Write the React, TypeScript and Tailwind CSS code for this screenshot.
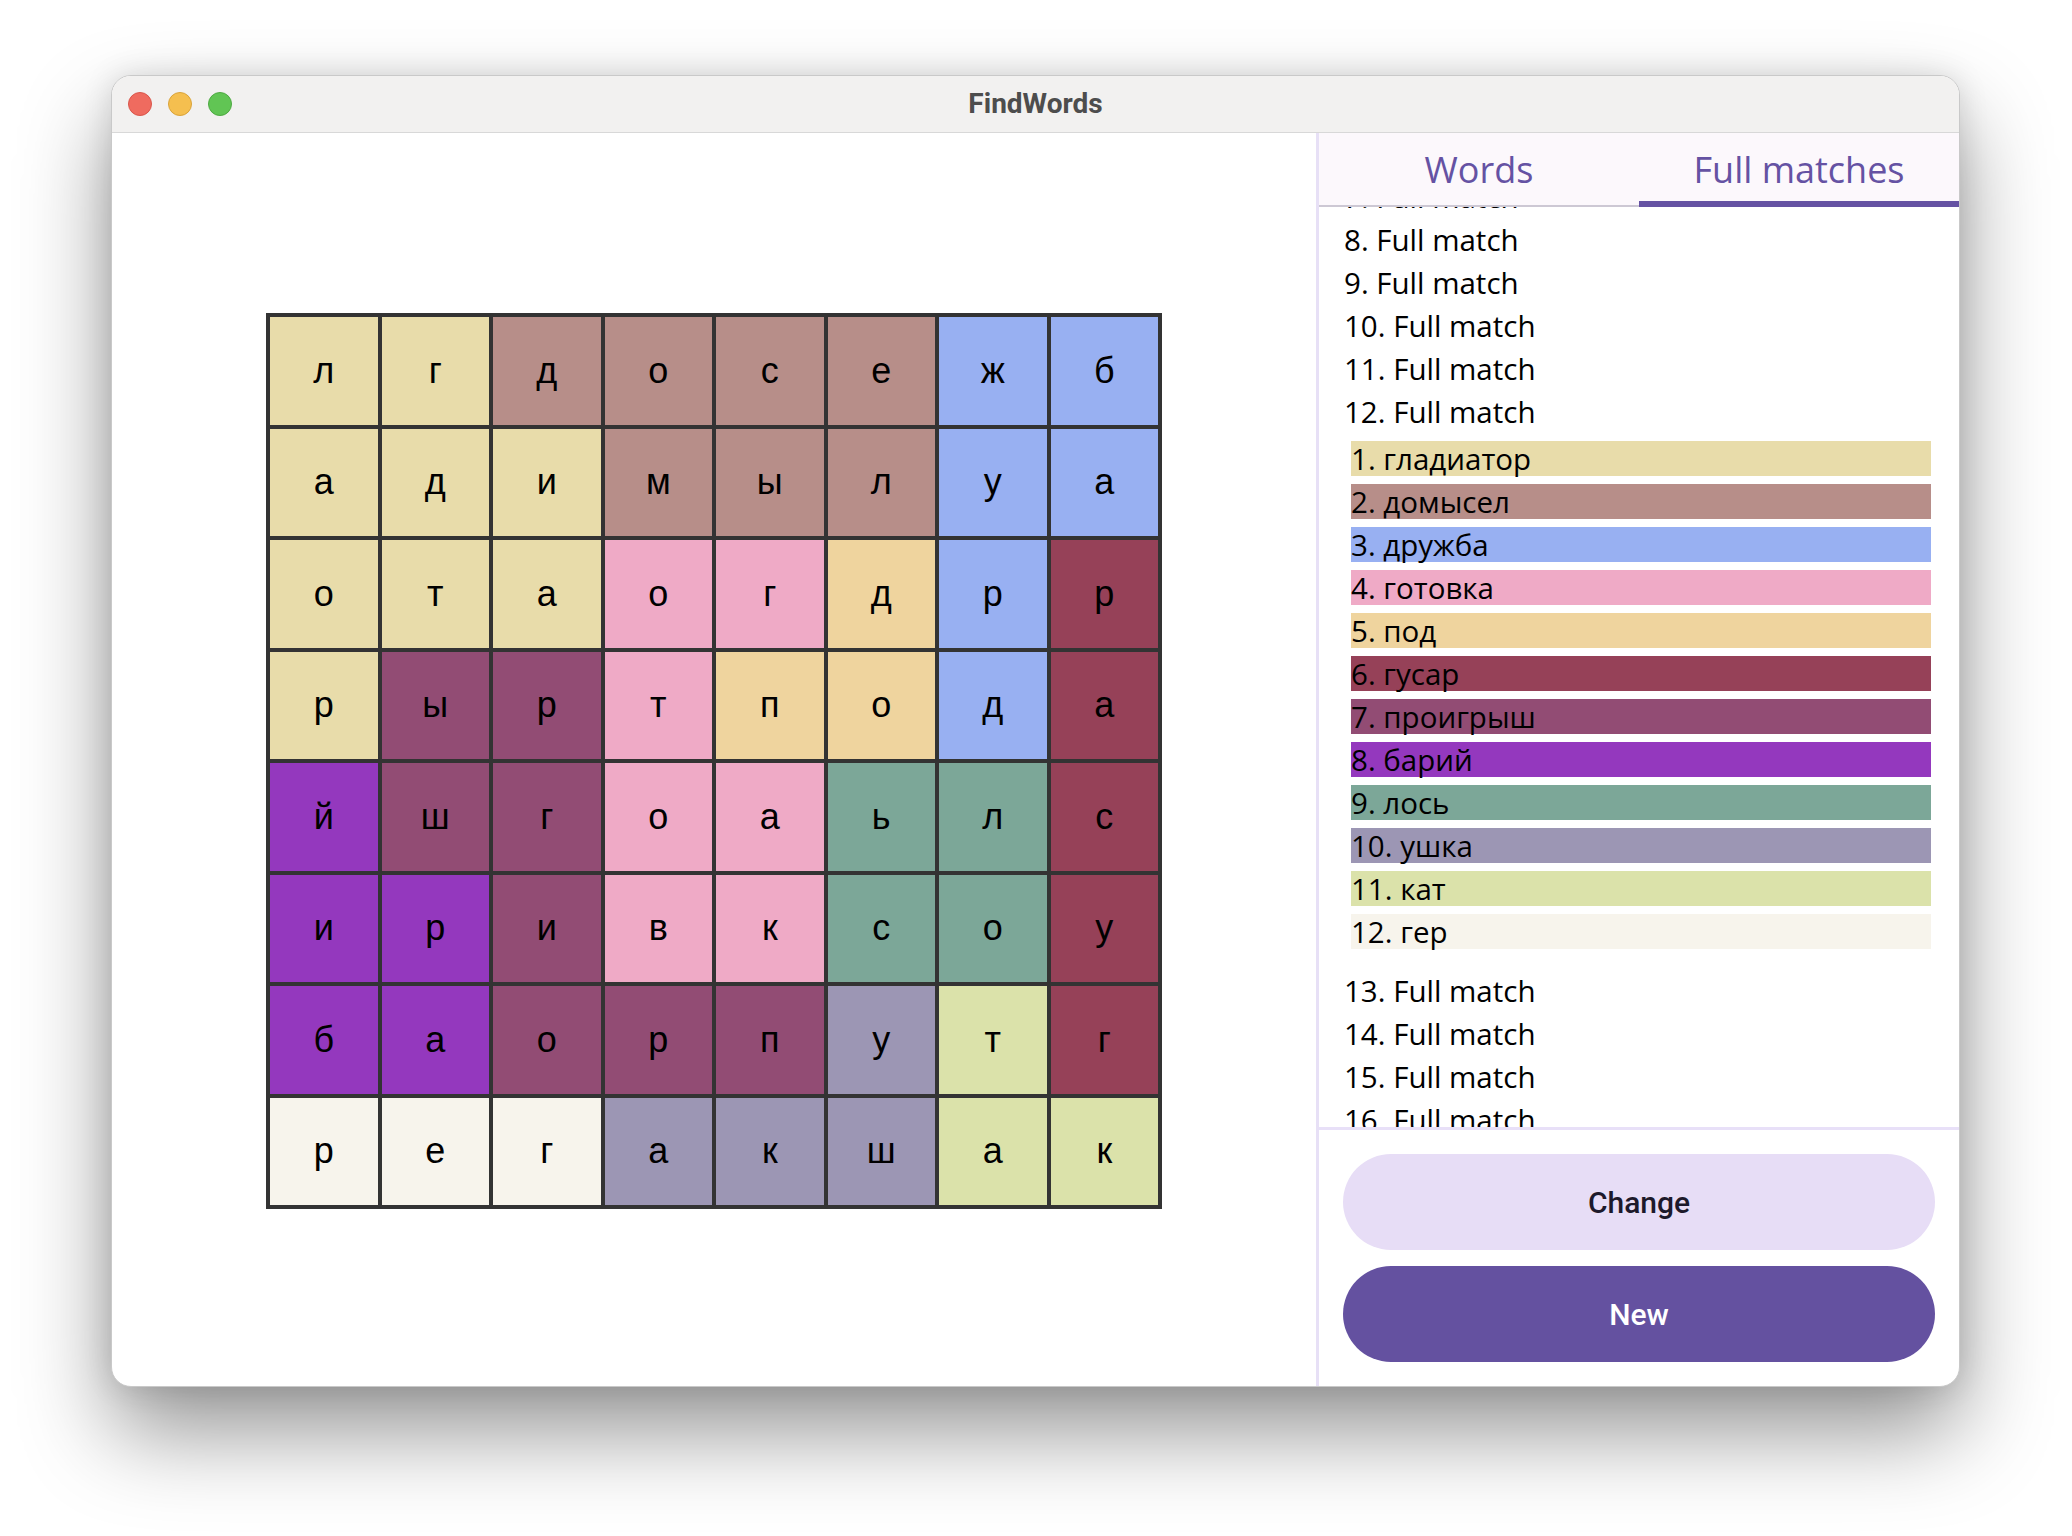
import React from 'react';

const COLORS: Record<string, string> = {
  Y: '#e8dcaa',
  B: '#b78e89',
  L: '#98b0f2',
  P: '#efaac6',
  O: '#efd49e',
  R: '#964158',
  M: '#924c74',
  V: '#9438be',
  G: '#7ca798',
  U: '#9c96b4',
  K: '#dbe2aa',
  W: '#f7f4ec',
};

// letter + colour key per cell, row by row
const GRID: string[][] = [
  ['лY', 'гY', 'дB', 'оB', 'сB', 'еB', 'жL', 'бL'],
  ['аY', 'дY', 'иY', 'мB', 'ыB', 'лB', 'уL', 'аL'],
  ['оY', 'тY', 'аY', 'оP', 'гP', 'дO', 'рL', 'рR'],
  ['рY', 'ыM', 'рM', 'тP', 'пO', 'оO', 'дL', 'аR'],
  ['йV', 'шM', 'гM', 'оP', 'аP', 'ьG', 'лG', 'сR'],
  ['иV', 'рV', 'иM', 'вP', 'кP', 'сG', 'оG', 'уR'],
  ['бV', 'аV', 'оM', 'рM', 'пM', 'уU', 'тK', 'гR'],
  ['рW', 'еW', 'гW', 'аU', 'кU', 'шU', 'аK', 'кK'],
];

const WORDS: [string, string][] = [
  ['гладиатор', 'Y'],
  ['домысел', 'B'],
  ['дружба', 'L'],
  ['готовка', 'P'],
  ['под', 'O'],
  ['гусар', 'R'],
  ['проигрыш', 'M'],
  ['барий', 'V'],
  ['лось', 'G'],
  ['ушка', 'U'],
  ['кат', 'K'],
  ['гер', 'W'],
];

const LIST_FONT = { fontFamily: '"Open Sans", "Noto Sans", sans-serif' };

function FullRow({ n }: { n: number }) {
  return <div className="h-[43px] leading-[43px] text-[29.5px] text-black">{n}. Full match</div>;
}

export default function App() {
  return (
    <div
      className="w-[2072px] h-[1536px] bg-white pl-[111px] pt-[75px]"
      style={{ fontFamily: 'Roboto, "Noto Sans", sans-serif' }}
    >
      <div className="w-[1849px] h-[1312px] rounded-[20px] overflow-hidden flex flex-col bg-white border border-[#c9c9c9] shadow-[0_45px_90px_rgba(0,0,0,0.42),0_0_30px_rgba(0,0,0,0.12)]">
        {/* Title bar */}
        <div className="h-[57px] shrink-0 grid grid-cols-[1fr_auto_1fr] items-center bg-[#f2f1f0] border-b border-[#d8d8d8]">
          <div className="flex items-center gap-[16px] pl-[16px]">
            <span className="w-[24px] h-[24px] rounded-full bg-[#ef6b5f] border border-[#d9564b]" />
            <span className="w-[24px] h-[24px] rounded-full bg-[#f5bf4f] border border-[#d9a33a]" />
            <span className="w-[24px] h-[24px] rounded-full bg-[#61c554] border border-[#4ea942]" />
          </div>
          <div className="text-[28px] font-bold text-[#4d4d4d]">FindWords</div>
          <div />
        </div>

        <div className="flex-1 flex min-h-0">
          {/* Board */}
          <div className="flex-1 flex items-center justify-center pt-[3px]">
            <div
              className="w-[896px] h-[896px] bg-[#333333] p-[4px] grid grid-cols-8 grid-rows-8 gap-[4px]"
              style={{ fontFamily: '"Liberation Sans", Arial, sans-serif' }}
            >
              {GRID.flat().map((c, i) => (
                <div
                  key={i}
                  className="flex items-center justify-center text-[36px] text-black"
                  style={{ backgroundColor: COLORS[c[1]] }}
                >
                  {c[0]}
                </div>
              ))}
            </div>
          </div>

          {/* Sidebar */}
          <div className="w-[643px] shrink-0 flex flex-col border-l-[3px] border-[#e7e0f6]" style={LIST_FONT}>
            <div className="h-[74px] shrink-0 grid grid-cols-2 bg-[#fcf8fc]">
              <div className="flex flex-col">
                <div className="flex-1 flex items-center justify-center pt-[5px] text-[36px] text-[#6552a3]">Words</div>
                <div className="h-[6px] flex flex-col justify-end">
                  <div className="h-[2px] bg-[#cdc8d4]" />
                </div>
              </div>
              <div className="flex flex-col">
                <div className="flex-1 flex items-center justify-center pt-[5px] text-[36px] text-[#6552a3]">Full matches</div>
                <div className="h-[6px] bg-[#6552a3]" />
              </div>
            </div>

            <div className="flex-1 min-h-0 overflow-hidden border-b-[3px] border-[#e8e0f8]">
              <div className="-mt-[32px] pl-[25px] pr-[28px]">
                {[7, 8, 9, 10, 11, 12].map((n) => (
                  <FullRow key={n} n={n} />
                ))}
                <div className="mt-[8px] pl-[7px] flex flex-col gap-[8.5px]">
                  {WORDS.map(([w, k], i) => (
                    <div
                      key={w}
                      className="h-[34.5px] leading-[35.5px] text-[29.5px] text-black"
                      style={{ backgroundColor: COLORS[k] }}
                    >
                      {i + 1}. {w}
                    </div>
                  ))}
                </div>
                <div className="mt-[20px]">
                  {[13, 14, 15, 16].map((n) => (
                    <FullRow key={n} n={n} />
                  ))}
                </div>
              </div>
            </div>

            <div
              className="shrink-0 pt-[24px] px-[24px] pb-[24px] flex flex-col gap-[16px]"
              style={{ fontFamily: 'Roboto, "Noto Sans", sans-serif' }}
            >
              <button className="h-[96px] rounded-full bg-[#e7ddf6] text-[30px] font-medium text-[#1d192b]">Change</button>
              <button className="h-[96px] rounded-full bg-[#6451a0] text-[30px] font-medium text-white">New</button>
            </div>
          </div>
        </div>
      </div>
    </div>
  );
}
